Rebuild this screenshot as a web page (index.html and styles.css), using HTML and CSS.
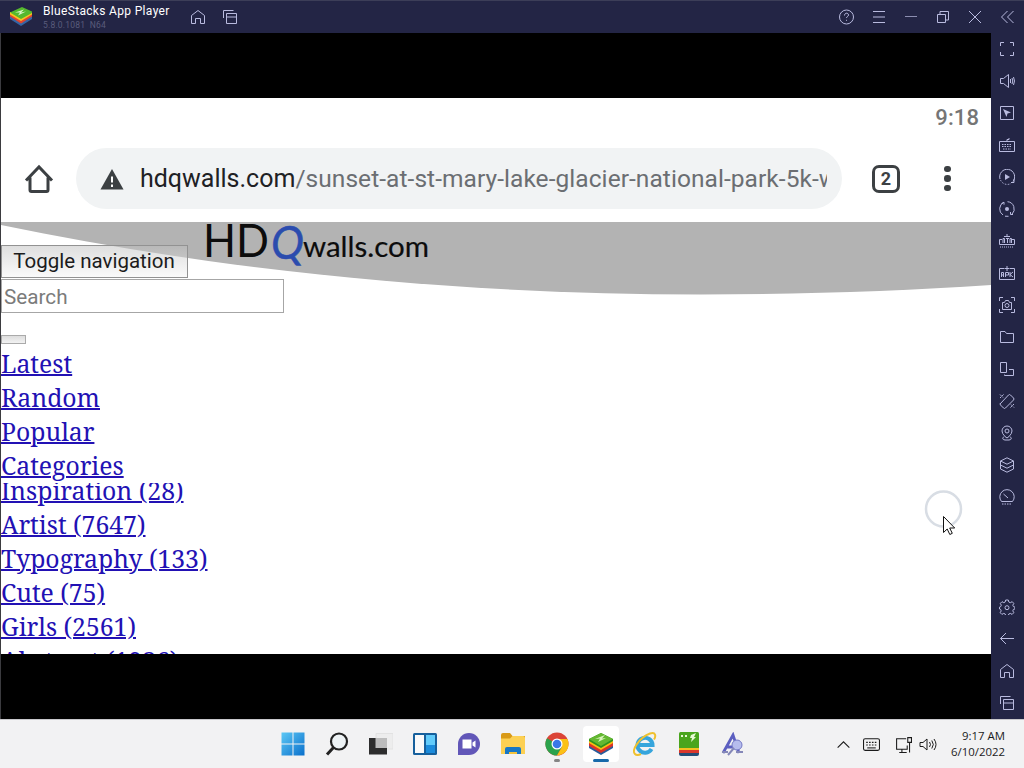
FILE: index.html
```
<!DOCTYPE html>
<html lang="en">
<head>
    <meta charset="UTF-8">
    <meta name="viewport" content="width=device-width, initial-scale=1.0">
    <title>BlueStacks App Player</title>
    <link rel="stylesheet" href="styles.css">
</head>
<body>
    <header class="titlebar">
        <svg class="logo" viewBox="0 0 22 20">
            <path d="M0 12l11 7 11-7v-3H0z" fill="#3565a5"/>
            <path d="M0 9.500l11 7 11-7v-3H0z" fill="#e2452e"/>
            <path d="M0 7.500l11 6.500 11-6.500V5H0z" fill="#f7c51e"/>
            <path d="M0 5.500L12 0l10 4.500v1.500l-11 6z" fill="#55b82e"/>
            <path d="M5 5.500l9-3-3 3 5-1-8 4 2-3z" fill="#dcf4c4"/>
        </svg>
        <div class="app-name">
            <div class="name">BlueStacks App Player</div>
            <div class="version">5.8.0.1081&nbsp; N64</div>
        </div>
        <svg class="icon home" viewBox="0 0 16 16"><path d="M1.500 14.500v-8L8 1.500l6.500 5v8h-4V9.500h-5v5z"/></svg>
        <svg class="icon" viewBox="0 0 16 16"><path d="M1.500 9V1.500h10M4.500 4.500h10v10h-10zM4.500 8h10"/></svg>
        <div class="window-buttons">
            <svg class="icon" viewBox="0 0 16 16"><circle cx="7.500" cy="8" r="7"/><path d="M5.500 6.500c0-3 4-3 4-.5 0 1.500-2 1.500-2 3M7.500 10.800v1"/></svg>
            <svg class="icon" viewBox="0 0 16 16"><path d="M2 2.500h12M2 8h12M2 13.500h12"/></svg>
            <svg class="icon" viewBox="0 0 16 16"><path d="M2 7.500h12" opacity=".7"/></svg>
            <svg class="icon" viewBox="0 0 16 16"><path d="M2.500 5.500h8v8h-8zM5 5.500v-3h8.500V11h-3"/></svg>
            <svg class="icon" viewBox="0 0 16 16"><path d="M2 2l12 12M14 2L2 14"/></svg>
            <svg class="icon" viewBox="0 0 16 16"><path d="M8.500 2l-6 6 6 6M14.500 2l-6 6 6 6"/></svg>
        </div>
    </header>

    <div class="player">
        <main class="screen">
            <div class="status">9:18</div>
            <div class="toolbar">
                <svg class="home-btn" viewBox="0 0 30 30"><path d="M2 16.500L15 3l13 13.500M6 13.500V26q0 1.500 1.500 1.500h15q1.500 0 1.500-1.500V13.500"/></svg>
                <div class="omnibox">
                    <svg viewBox="0 0 24 21"><path d="M12 0l11.500 20.500H.5z" fill="#3c4043"/><path d="M12 7.500v6M12 15.500v2.500" stroke="#fff" stroke-width="2"/></svg>
                    <div class="url"><span>hdqwalls.com</span>/sunset-at-st-mary-lake-glacier-national-park-5k-wallpaper</div>
                </div>
                <div class="tabs">2</div>
                <div class="dots"><i></i><i></i><i></i></div>
            </div>
            <div class="page">
                <svg class="banner" viewBox="0 0 990 76">
                    <path d="M0 0H990V64C900 70 800 73.500 700 73.500C460 73.500 220 50 0 4z" fill="#b3b3b3"/>
                    <text class="hd" x="202" y="36" font-size="47" textLength="66" lengthAdjust="spacingAndGlyphs">HD</text>
                    <text class="q" x="270" y="38" font-size="47" textLength="33" lengthAdjust="spacingAndGlyphs">Q</text>
                    <text class="walls" x="302" y="36" font-size="29" textLength="126" lengthAdjust="spacingAndGlyphs">walls.com</text>
                </svg>
                <button class="toggle">Toggle navigation</button>
                <input class="search" type="text" placeholder="Search">
                <button class="submit"></button>
                <nav class="links">
                    <a href="#">Latest</a>
                    <a href="#">Random</a>
                    <a href="#">Popular</a>
                    <a href="#">Categories</a>
                </nav>
                <nav class="links categories">
                    <a href="#">Inspiration (28)</a>
                    <a href="#">Artist (7647)</a>
                    <a href="#">Typography (133)</a>
                    <a href="#">Cute (75)</a>
                    <a href="#">Girls (2561)</a>
                    <a href="#">Abstract (1936)</a>
                </nav>
            </div>
        </main>
        <aside class="sidebar">
            <svg class="icon" viewBox="0 0 16 16"><path d="M1.500 5V1.500H5M11 1.500h3.500V5M14.500 11v3.500H11M5 14.500H1.500V11"/></svg>
            <svg class="icon" viewBox="0 0 16 16"><path d="M1.500 5.500h3l5-4v13l-5-4h-3zM11.500 6v4M13 5q1.500 3 0 6M14.500 4q2 4 0 8"/></svg>
            <svg class="icon" viewBox="0 0 16 16"><path d="M1.500 1.500h13v13h-13z"/><path class="fill" d="M4 4l8 3.500-3.500 1L7.500 12z"/></svg>
            <svg class="icon" viewBox="0 0 16 16"><path d="M.5 4.500h15v10H.5zM8 4.500v-2h2V1"/><path d="M3 7.500h10M3 9.500h10M4 12h8" stroke-dasharray="1.500 1"/></svg>
            <svg class="icon" viewBox="0 0 16 16"><path d="M1 10A7.500 7.500 0 1 1 14 12.500M15 10v3.500h-3"/><path d="M1.500 11A7.500 7.500 0 0 0 12 14.500" stroke-dasharray="1.500 1.500"/><path class="fill" d="M6 5l5 3-5 3z"/></svg>
            <svg class="icon" viewBox="0 0 16 16"><path d="M4 14A7.300 7.300 0 0 1 5 1.200M2.500 2.500L5 1.200v2.500M8.500.7a7.300 7.300 0 0 1 4.500 12.500M11.500 11v2.500H14M6 15.200l3.500.1"/><circle class="fill" cx="8" cy="8" r="2"/></svg>
            <svg class="icon" viewBox="0 0 16 16"><path d="M3 6.500H.5v5h15v-5H13M8 1v3M5 3.500h6M4 10V5.500h1.500V10M7 5.500h3M8.500 5.500V10M11 10V5.500h1.500V10"/><path d="M1 14h14" stroke-dasharray="1 1"/></svg>
            <svg class="icon" viewBox="0 0 16 16"><path d="M5 3.500H.5v11h15v-11H11M8 1v5M5.500 3.500h5M2.500 12V7.500h2V12M2.500 10h2M6.500 12V7.500h3V10h-3M11 7v5M14 7l-3 2.500 3 2.500"/></svg>
            <svg class="icon" viewBox="0 0 16 16"><path d="M.5 4V.5H4M12 .5h3.500V4M15.500 12v3.500H12M4 15.500H.5V12M3.500 5.500h2l1-2h3l1 2h2v7h-9z"/><circle cx="8" cy="8.500" r="2"/></svg>
            <svg class="icon" viewBox="0 0 16 16"><path d="M1.500 2.500h4.500l1.500 2h7v9h-13z"/></svg>
            <svg class="icon" viewBox="0 0 16 16"><path d="M1.500 1.500h6v10h-6zM10 8.500h4.500v6H5.500v-1"/></svg>
            <svg class="icon" viewBox="0 0 16 16"><path d="M1.500 10.500l8-8.500q1-1 2 0l3 3q1 1 0 2l-8 8q-1 1-2 0l-3-3q-1-1 0-2z"/><path d="M1 5l4-4M1 1.500l3 3M15 11l-4 4M12 11.500l3 3" stroke-dasharray="2 1"/></svg>
            <svg class="icon" viewBox="0 0 16 16"><path d="M6 11.500Q3 8.500 3 6a5 5 0 0 1 10 0q0 2.500-3 5.500l-2 1.500zM5 11.500q-3 3 1 3.500h4q4-.5 1-3.500"/><circle cx="8" cy="6" r="2"/></svg>
            <svg class="icon" viewBox="0 0 16 16"><path d="M8 .8l6.500 3.200L8 7.200 1.500 4zM1.500 4v8L8 15.200l6.500-3.200V4M1.500 8L8 11.200 14.500 8"/></svg>
            <svg class="icon" viewBox="0 0 16 16"><path d="M2.500 12.500a7.200 7.200 0 1 1 11 0zM4.500 5l4.500 4"/><path d="M3 15h10" stroke-dasharray="1.500 1"/></svg>
            <div class="spacer"></div>
            <svg class="icon" viewBox="0 0 16 16"><path d="M6.700 1h2.600l.5 2 1.500.7 1.900-1 1.600 1.700-1 1.800.6 1.400 1.600.5v1.800l-1.600.5-.6 1.500 1 1.800-1.700 1.700-1.800-1-1.500.6-.5 1.500H6.700l-.5-1.500-1.500-.6-1.800 1-1.700-1.700 1-1.800-.6-1.500L.5 10V8.100l1.200-.5.6-1.400-1-1.800L3 2.700l1.800 1L6.200 3z"/><circle cx="8" cy="8.700" r="2"/></svg>
            <svg class="icon" viewBox="0 0 16 16"><path d="M15 7.500H1.500M7 2L1.500 7.500 7 13"/></svg>
            <svg class="icon" viewBox="0 0 16 16"><path d="M1.500 14.500v-8L8 1.500l6.500 5v8h-4V9.500h-5v5z"/></svg>
            <svg class="icon" viewBox="0 0 16 16"><path d="M1.500 9V1.500h10M4.500 4.500h10v10h-10zM4.500 8h10"/></svg>
        </aside>
    </div>

    <footer class="taskbar">
        <div class="apps">
            <svg viewBox="0 0 24 24"><defs><linearGradient id="win" x2="1" y2="1"><stop stop-color="#5cc8f5"/><stop offset="1" stop-color="#0a70cc"/></linearGradient></defs><path d="M.5 .5h11v11H.5zM12.500 .5h11v11h-11zM.5 12.500h11v11H.5zM12.500 12.500h11v11h-11z" fill="url(#win)"/></svg>
            <svg viewBox="0 0 24 24"><circle cx="14" cy="9.500" r="8" fill="#eef3f5" stroke="#222" stroke-width="2.200"/><path d="M8.500 15.500L2 22.500" stroke="#222" stroke-width="3"/></svg>
            <svg viewBox="0 0 24 24"><path d="M7 1.500h17V17H7z" fill="#ededed" stroke="#e2e2e2"/><path d="M0 6h18v16.500H0z" fill="#2d2d2d"/><path d="M6.500 6H18v10H6.500z" fill="#bcbcbc"/></svg>
            <svg viewBox="0 0 24 24"><rect width="24" height="22" y="1" rx="1.500" fill="#17609c"/><path d="M2 3h9v18H2z" fill="#fafafa"/><path d="M13 3h9v10h-9z" fill="#62ccfb"/><path d="M13 13h9v8h-9z" fill="#1c8cdc"/></svg>
            <svg viewBox="0 0 24 24"><path d="M1 23V12a11 11 0 1 1 11 11z" fill="#6257b8"/><path d="M5.500 7.500h9v9h-9zM15.500 10.500l3-2v7l-3-2z" fill="#fff"/></svg>
            <svg viewBox="0 0 24 24"><path d="M0 3q0-2 2-2h7l2.500 3H24v6H0z" fill="#d99a17"/><path d="M0 6.500h9L11.500 4H22q2 0 2 2v16H0z" fill="#fcd053"/><path d="M4 22v-5q0-2 2-2h12q2 0 2 2v5z" fill="#1877c5"/><path d="M8 20h8v2H8z" fill="#f5c33b"/></svg>
            <div class="app running">
                <svg viewBox="0 0 24 24"><circle cx="12" cy="12" r="11.500" fill="#db4437"/><path d="M12 12L2 6.200A11.500 11.500 0 0 0 12 23.500l5-9z" fill="#2ba24c"/><path d="M12 7h10.400A11.500 11.500 0 0 1 12 23.500l5-8.700z" fill="#fbc116"/><circle cx="12" cy="12" r="5.500" fill="#fff"/><circle cx="12" cy="12" r="4.300" fill="#3978e8"/></svg>
            </div>
            <div class="app active">
                <svg viewBox="0 0 24 24"><path d="M0 16l12 7 12-7v-4H0z" fill="#285d9c"/><path d="M0 14l12 7 12-7V9H0z" fill="#dc3328"/><path d="M0 11l12 7 12-7V8H0z" fill="#f8bd13"/><path d="M0 7l12-6 12 6v2l-12 7L0 9z" fill="#2d941d"/><path d="M0 7l12-6 12 6-12 7z" fill="#64b832"/><path d="M6 7l10-4-3 3.500 4-.5-8 4 2-3.500z" fill="#d9f3bc"/></svg>
            </div>
            <svg viewBox="0 0 24 24"><path d="M18.500 17A7.500 7.500 0 1 1 19.500 13H6" fill="none" stroke="#36a5dc" stroke-width="4"/><path d="M2 22C-2 18 7 5 17 1.500c6-2 6 3 4 6M2 22q2 2 6 0" fill="none" stroke="#efc12f" stroke-width="2"/></svg>
            <svg viewBox="0 0 24 24"><rect x="2" y="0" width="20" height="17" rx="1.500" fill="#4aa51d"/><path d="M2 16h20v3H2z" fill="#f5c020"/><path d="M2 18h20v3H2z" fill="#da382c"/><path d="M2 21h20v1q0 2-2 2H4q-2 0-2-2z" fill="#244e78"/><path d="M14 3l5-2-2 4h2l-5 5 1-4h-2zM4 3h2v2H4zM8 3h2v2H8z" fill="#e8f9d4"/></svg>
            <svg viewBox="0 0 24 24"><path d="M2 21L12 3l6 18M6 15h10" fill="none" stroke="#5c5fc0" stroke-width="2.800"/><circle cx="16" cy="13" r="5" fill="#b6bced" stroke="#7478c5"/><path d="M13 16l-6 7M1 20h6M15 20h7" stroke="#8588b8" stroke-width="2"/></svg>
        </div>
        <div class="tray">
            <svg viewBox="0 0 16 16"><path d="M2.500 11L8 5.500l5.500 5.500"/></svg>
            <svg class="keyboard" viewBox="0 0 16 16"><rect x=".5" y="2.500" width="15" height="11" rx="1.500"/><path d="M3 6h10M3 8.500h10" stroke-dasharray="1.500 1.200"/><path d="M4 11.200h8"/></svg>
            <svg viewBox="0 0 16 16"><path d="M10.500 2.500H1.500v10h10V9M4 15.500h7M6.500 12.500v3M12 1.500h3.500V6H12zM13.700 6v9.500"/></svg>
            <svg class="volume" viewBox="0 0 18 16"><path d="M1 6h3l4-3.500v11L4 10H1zM10.500 5.500q2 2.500 0 5M12.800 4q3 4 0 8M15 2.500q4 5.500 0 11"/></svg>
            <div class="clock">
                <div>9:17 AM</div>
                <div>6/10/2022</div>
            </div>
        </div>
    </footer>

    <!-- pointer with its touch ring -->
    <svg class="cursor" viewBox="0 0 44 50">
        <circle cx="22.500" cy="21" r="17.500" fill="none" stroke="#d8dde4" stroke-width="2.500"/>
        <path d="M22.500 28.500v16l3.700-3.500 2.600 5.500 2.500-1.200-2.600-5.300h5z" fill="#fff" stroke="#111"/>
    </svg>
</body>
</html>
```

FILE: styles.css
```
* {
    box-sizing: border-box;
}
body {
    margin: 0;
    width: 1024px;
    height: 768px;
    overflow: hidden;
    display: flex;
    flex-direction: column;
    font-family: Roboto, sans-serif;
    background-color: #000;
}
svg {
    display: block;
    flex: none;
}
.icon {
    width: 16px;
    height: 16px;
    fill: none;
    stroke: #b9bbdf;
    stroke-width: 1;
}
.icon .fill {
    fill: #b9bbdf;
    stroke: none;
}
.titlebar {
    height: 33px;
    flex: none;
    display: flex;
    align-items: center;
    padding-left: 10px;
    background-color: #232545;
    border-top: 1px solid #3c3e58;
}
.logo {
    width: 22px;
    height: 20px;
}
.app-name {
    width: 147px;
    margin-left: 11px;
}
.name {
    color: #fff;
    font-size: 12px;
    letter-spacing: 0.33px;
    line-height: 15px;
    white-space: nowrap;
}
.version {
    color: #5a5c7c;
    font-size: 8.500px;
    letter-spacing: 0.2px;
    line-height: 12px;
}
.home {
    margin-right: 16px;
}
.window-buttons {
    display: flex;
    gap: 16px;
    margin-left: auto;
    padding-right: 9px;
}
.player {
    height: 686px;
    flex: none;
    display: flex;
    border-left: 1px solid #3b3b3f;
}
.screen {
    width: 990px;
    height: 556px;
    margin-top: 65px;
    background-color: #fff;
    overflow: hidden;
}
.status {
    height: 40px;
    padding-right: 12px;
    text-align: right;
    font-size: 22px;
    font-weight: 500;
    line-height: 40px;
    letter-spacing: 0.1px;
    color: #757575;
}
.toolbar {
    height: 84px;
    display: flex;
    align-items: center;
    padding: 0 0 3px 22.500px;
}
.home-btn {
    width: 30px;
    height: 30px;
    fill: none;
    stroke: #3c4043;
    stroke-width: 3;
}
.omnibox {
    width: 766px;
    height: 61px;
    margin-left: 22.500px;
    border-radius: 31px;
    background-color: #f1f3f4;
    display: flex;
    align-items: center;
    padding: 1px 15px 0 24px;
}
.omnibox svg {
    width: 24px;
    height: 21px;
}
.url {
    margin-left: 16px;
    width: 687px;
    overflow: hidden;
    white-space: nowrap;
    font-size: 24.500px;
    letter-spacing: 0.06px;
    line-height: 32px;
    color: #6b6e72;
}
.url span {
    font-size: 25px;
    letter-spacing: 0;
    color: #202124;
}
.tabs {
    width: 28px;
    height: 28px;
    margin-left: 30px;
    border: 3px solid #3c4043;
    border-radius: 7px;
    text-align: center;
    font-size: 18px;
    font-weight: bold;
    line-height: 22px;
    color: #3c4043;
}
.dots {
    margin-left: 44px;
    display: flex;
    flex-direction: column;
    gap: 3px;
}
.dots i {
    width: 6.500px;
    height: 6.500px;
    border-radius: 50%;
    background-color: #3c4043;
}
.page {
    display: flex;
    flex-direction: column;
    align-items: flex-start;
    height: 432px;
    overflow: hidden;
}
.banner {
    width: 990px;
    height: 76px;
    margin: -1px 0 -52px;
    font-family: Lato, sans-serif;
    fill: #0c0c0c;
}
.banner .q {
    font-style: italic;
    fill: #2b4cae;
    stroke: #2b4cae;
    stroke-width: 0.5;
}
.banner .walls {
    stroke: #0c0c0c;
    stroke-width: 0.2;
}
.toggle {
    position: relative;
    width: 187px;
    height: 33px;
    flex: none;
    padding: 0 1px 1px 0;
    border: 1px solid #929292;
    background: linear-gradient(rgba(190, 190, 190, 0.5), rgba(245, 245, 245, 0.5));
    font-family: Roboto, sans-serif;
    font-size: 20.500px;
    color: #1c1c1c;
}
.search {
    width: 283px;
    height: 34px;
    flex: none;
    margin: 1px 0 22px;
    padding: 1px 2px 0;
    border: 1px solid #a6a6a6;
    font-family: Roboto, sans-serif;
    font-size: 20.700px;
}
.search::placeholder {
    color: #7b7b7b;
}
.submit {
    width: 25px;
    height: 9px;
    flex: none;
    padding: 0;
    margin-bottom: 3px;
    border: 1px solid #aaa;
    background: linear-gradient(#ddd, #f2f2f2);
}
.links {
    display: flex;
    flex-direction: column;
    align-items: flex-start;
    flex: none;
}
.links a {
    height: 34px;
    font-family: "Noto Serif", "DejaVu Serif Condensed", "DejaVu Serif", serif;
    font-size: 24.750px;
    line-height: 34px;
    white-space: nowrap;
    color: #2211b4;
    text-decoration-thickness: 2px;
}
.categories {
    overflow: hidden;
}
.categories a:first-child {
    margin-top: -9px;
}
.sidebar {
    width: 33px;
    display: flex;
    flex-direction: column;
    gap: 16px;
    padding: 8px 0 8px 8px;
    background-color: #232545;
}
.spacer {
    flex: 1;
}
.taskbar {
    height: 49px;
    flex: none;
    display: flex;
    align-items: center;
    justify-content: space-between;
    padding: 0 19px 0 280.500px;
    border-top: 1px solid #c8c8cc;
    background-color: #f2f2f3;
}
.apps {
    display: flex;
    align-items: center;
    gap: 20px;
}
.apps svg {
    width: 24px;
    height: 24px;
}
.app {
    position: relative;
}
.active {
    margin: 0 -6px;
    padding: 6px;
    border-radius: 4px;
    background-color: #fff;
}
.app::after {
    content: "";
    position: absolute;
    left: 50%;
    bottom: -6px;
    width: 6px;
    height: 3px;
    margin-left: -3px;
    border-radius: 2px;
    background-color: #858585;
}
.active::after {
    bottom: 0;
    width: 16px;
    margin-left: -8px;
    background-color: #1769aa;
}
.tray {
    display: flex;
    align-items: center;
    color: #1b1b1b;
}
.tray svg {
    width: 17px;
    height: 17px;
    fill: none;
    stroke: #1b1b1b;
}
.keyboard {
    margin: 0 15px 0 11px;
}
.tray .volume {
    width: 18px;
    margin-left: 7px;
}
.clock {
    width: 68px;
    text-align: right;
    font-family: "Open Sans", sans-serif;
    font-size: 11.400px;
    line-height: 16px;
}
.cursor {
    position: absolute;
    left: 921px;
    top: 488px;
    width: 44px;
    height: 50px;
}
```
